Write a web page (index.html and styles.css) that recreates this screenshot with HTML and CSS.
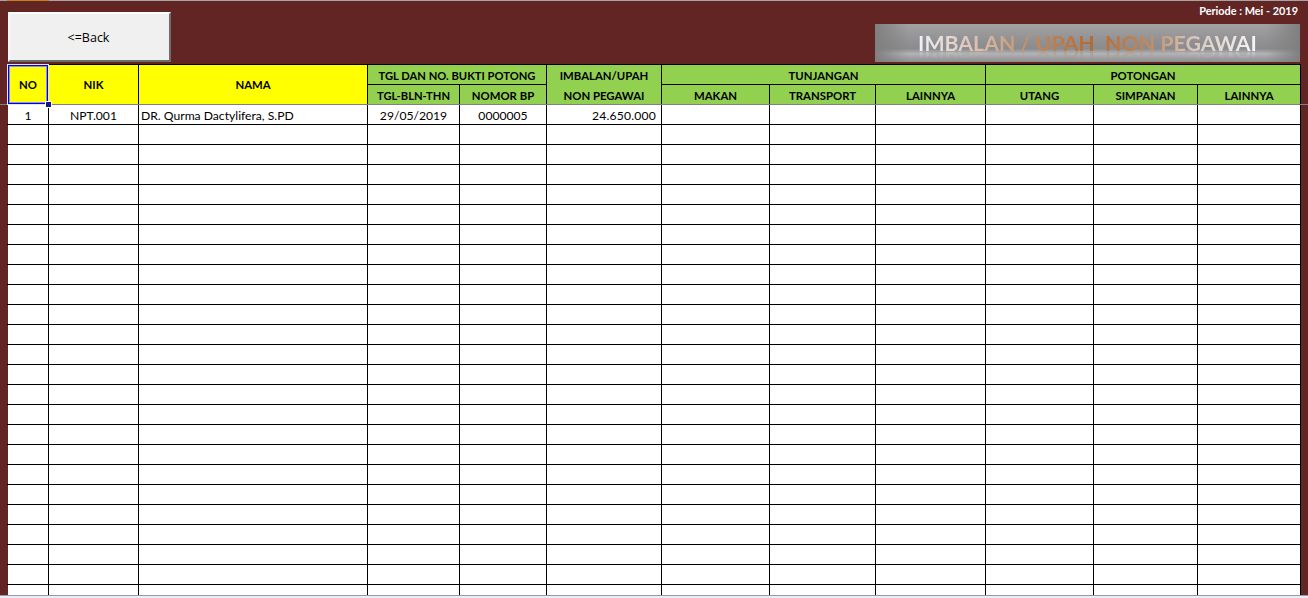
FILE: index.html
```html
<!DOCTYPE html>
<html lang="id">
<head>
<meta charset="utf-8">
<title>Imbalan / Upah Non Pegawai</title>
<link rel="stylesheet" href="styles.css">
</head>
<body>
<div class="titlebar"><span class="titlebar-tab"></span></div>
<header class="top">
  <button class="back" type="button">&lt;=Back</button>
  <div class="top-right">
    <div class="periode">Periode : Mei - 2019</div>
    <div class="banner"><span class="banner-text">IMBALAN / UPAH&nbsp; NON PEGAWAI</span></div>
  </div>
</header>
<main class="sheet">
  <div class="freeze"></div>
  <table class="grid">
    <colgroup>
      <col class="c1"><col class="c2"><col class="c3"><col class="c4"><col class="c5"><col class="c6">
      <col class="c7"><col class="c8"><col class="c9"><col class="c10"><col class="c11"><col class="c12">
    </colgroup>
    <thead>
      <tr>
        <th class="key selected" rowspan="2">NO<span class="sel-box"></span></th>
        <th class="key" rowspan="2">NIK</th>
        <th class="key" rowspan="2">NAMA</th>
        <th class="tight" colspan="2">TGL DAN NO. BUKTI POTONG</th>
        <th class="join-top">IMBALAN/UPAH</th>
        <th colspan="3">TUNJANGAN</th>
        <th colspan="3">POTONGAN</th>
      </tr>
      <tr>
        <th class="tight">TGL-BLN-THN</th><th>NOMOR BP</th><th class="join-bottom">NON PEGAWAI</th>
        <th>MAKAN</th><th>TRANSPORT</th><th>LAINNYA</th>
        <th>UTANG</th><th>SIMPANAN</th><th>LAINNYA</th>
      </tr>
    </thead>
    <tbody>
      <tr><td class="mid">1</td><td class="mid">NPT.001</td><td class="name">DR. Qurma Dactylifera, S.PD</td><td class="mid">29/05/2019</td><td class="mid">0000005</td><td class="num">24.650.000</td><td></td><td></td><td></td><td></td><td></td><td></td></tr>
      <tr><td></td><td></td><td></td><td></td><td></td><td></td><td></td><td></td><td></td><td></td><td></td><td></td></tr>
      <tr><td></td><td></td><td></td><td></td><td></td><td></td><td></td><td></td><td></td><td></td><td></td><td></td></tr>
      <tr><td></td><td></td><td></td><td></td><td></td><td></td><td></td><td></td><td></td><td></td><td></td><td></td></tr>
      <tr><td></td><td></td><td></td><td></td><td></td><td></td><td></td><td></td><td></td><td></td><td></td><td></td></tr>
      <tr><td></td><td></td><td></td><td></td><td></td><td></td><td></td><td></td><td></td><td></td><td></td><td></td></tr>
      <tr><td></td><td></td><td></td><td></td><td></td><td></td><td></td><td></td><td></td><td></td><td></td><td></td></tr>
      <tr><td></td><td></td><td></td><td></td><td></td><td></td><td></td><td></td><td></td><td></td><td></td><td></td></tr>
      <tr><td></td><td></td><td></td><td></td><td></td><td></td><td></td><td></td><td></td><td></td><td></td><td></td></tr>
      <tr><td></td><td></td><td></td><td></td><td></td><td></td><td></td><td></td><td></td><td></td><td></td><td></td></tr>
      <tr><td></td><td></td><td></td><td></td><td></td><td></td><td></td><td></td><td></td><td></td><td></td><td></td></tr>
      <tr><td></td><td></td><td></td><td></td><td></td><td></td><td></td><td></td><td></td><td></td><td></td><td></td></tr>
      <tr><td></td><td></td><td></td><td></td><td></td><td></td><td></td><td></td><td></td><td></td><td></td><td></td></tr>
      <tr><td></td><td></td><td></td><td></td><td></td><td></td><td></td><td></td><td></td><td></td><td></td><td></td></tr>
      <tr><td></td><td></td><td></td><td></td><td></td><td></td><td></td><td></td><td></td><td></td><td></td><td></td></tr>
      <tr><td></td><td></td><td></td><td></td><td></td><td></td><td></td><td></td><td></td><td></td><td></td><td></td></tr>
      <tr><td></td><td></td><td></td><td></td><td></td><td></td><td></td><td></td><td></td><td></td><td></td><td></td></tr>
      <tr><td></td><td></td><td></td><td></td><td></td><td></td><td></td><td></td><td></td><td></td><td></td><td></td></tr>
      <tr><td></td><td></td><td></td><td></td><td></td><td></td><td></td><td></td><td></td><td></td><td></td><td></td></tr>
      <tr><td></td><td></td><td></td><td></td><td></td><td></td><td></td><td></td><td></td><td></td><td></td><td></td></tr>
      <tr><td></td><td></td><td></td><td></td><td></td><td></td><td></td><td></td><td></td><td></td><td></td><td></td></tr>
      <tr><td></td><td></td><td></td><td></td><td></td><td></td><td></td><td></td><td></td><td></td><td></td><td></td></tr>
      <tr><td></td><td></td><td></td><td></td><td></td><td></td><td></td><td></td><td></td><td></td><td></td><td></td></tr>
      <tr><td></td><td></td><td></td><td></td><td></td><td></td><td></td><td></td><td></td><td></td><td></td><td></td></tr>
      <tr><td></td><td></td><td></td><td></td><td></td><td></td><td></td><td></td><td></td><td></td><td></td><td></td></tr>
    </tbody>
  </table>
</main>
<div class="statusline"></div>
</body>
</html>
```
FILE: styles.css
```css
* { box-sizing: border-box; }

html, body { height: 100%; }

body {
  margin: 0;
  height: 598px;
  overflow: hidden;
  display: flex;
  flex-direction: column;
  background: #632523;
  font-family: "Lato", "Liberation Sans", sans-serif;
  color: #000;
}

.titlebar {
  height: 1px;
  flex: none;
  background: #a5a5a5;
  padding-left: 7px;
}

.titlebar-tab {
  display: block;
  width: 42px;
  height: 1px;
  background: #c2801f;
}

.top {
  flex: none;
  height: 63px;
  display: flex;
  justify-content: space-between;
  padding: 11px 8px 0 8px;
}

.back {
  width: 163px;
  height: 50px;
  background: #f0f0f0;
  border: 2px solid;
  border-color: #fff #6d6d6d #6d6d6d #f7f7f7;
  font-family: "Open Sans", sans-serif;
  font-size: 12.5px;
  color: #000;
  padding: 0 2px 0 0;
}

.top-right {
  width: 425px;
  margin-top: -10px;
  display: flex;
  flex-direction: column;
}

.periode {
  height: 22px;
  padding: 2px 2px 0 0;
  text-align: right;
  font-size: 10.9px;
  font-weight: 700;
  color: #fff;
}

.banner {
  height: 38px;
  text-align: center;
  background:
    linear-gradient(90deg, #7f7f7f 0%, rgba(150,150,150,0) 8%, rgba(150,150,150,0) 92%, #7f7f7f 100%),
    linear-gradient(180deg, #a2a2a4 0%, #919193 45%, #8b8b8d 65%, #b2b3b6 78%, #8d8d8f 100%);
  overflow: hidden;
}

.banner-text {
  display: inline-block;
  margin-top: 6px;
  line-height: 26px;
  font-size: 21.3px;
  font-weight: 700;
  white-space: nowrap;
  color: transparent;
  background: linear-gradient(90deg, #eef2fa 0%, #d9b8a4 20%, #c08a5f 34%, #b8682c 52%, #c08a5f 68%, #d8c4b6 80%, #f4f6fb 100%);
  -webkit-background-clip: text;
  background-clip: text;
  -webkit-box-reflect: below -9px linear-gradient(180deg, transparent 55%, rgba(255,255,255,.5) 100%);
}

.sheet {
  position: relative;
  flex: none;
  height: 531px;
  padding-left: 7px;
  overflow: hidden;
}

.freeze {
  position: absolute;
  left: 0;
  right: 0;
  top: 40px;
  height: 1px;
  background: #808080;
  z-index: 3;
}

.grid {
  table-layout: fixed;
  width: 1294px;
  border-collapse: collapse;
  background: #fff;
  font-size: 12px;
}

.c1 { width: 41px; }
.c2 { width: 90px; }
.c3 { width: 229px; }
.c4 { width: 92px; }
.c5 { width: 87px; }
.c6 { width: 115px; }
.c7 { width: 108px; }
.c8 { width: 106px; }
.c9 { width: 110px; }
.c10 { width: 108px; }
.c11 { width: 104px; }
.c12 { width: 103px; }

tr { height: 20px; }

th, td {
  border: 1px solid #000;
  padding: 1px 0 0;
  white-space: nowrap;
  overflow: hidden;
  height: 20px;
}

th {
  background: #92d050;
  font-weight: 700;
  font-size: 11.35px;
  text-align: center;
  vertical-align: middle;
}

th.tight { font-size: 11.2px; }

th.key { background: #ff0; padding-top: 0; }

th.selected { position: relative; overflow: visible; }

th.join-top { border-bottom: 0; }
th.join-bottom { border-top: 0; padding-top: 3px; }

.sel-box {
  position: absolute;
  left: 0;
  top: 0;
  width: 40px;
  height: 39px;
  border: 1px solid #0000e6;
  box-shadow: 0 0 0 1px #e6e6e6, inset 0 0 0 1px #8c8cf0;
  z-index: 4;
}

.sel-box::after {
  content: "";
  position: absolute;
  right: -4px;
  bottom: -4px;
  width: 5px;
  height: 5px;
  background: #14148c;
  outline: 1px solid #fff;
}

td { font-size: 12.15px; vertical-align: middle; }
tbody td:first-child { border-left-color: #632523; }
.mid { text-align: center; }
.name { padding-left: 2px; }
.num { text-align: right; padding-right: 5px; letter-spacing: 0.2px; }

.statusline {
  flex: 1;
  border-top: 1px solid #9a9ca3;
  background: #e9edf5;
}
```
